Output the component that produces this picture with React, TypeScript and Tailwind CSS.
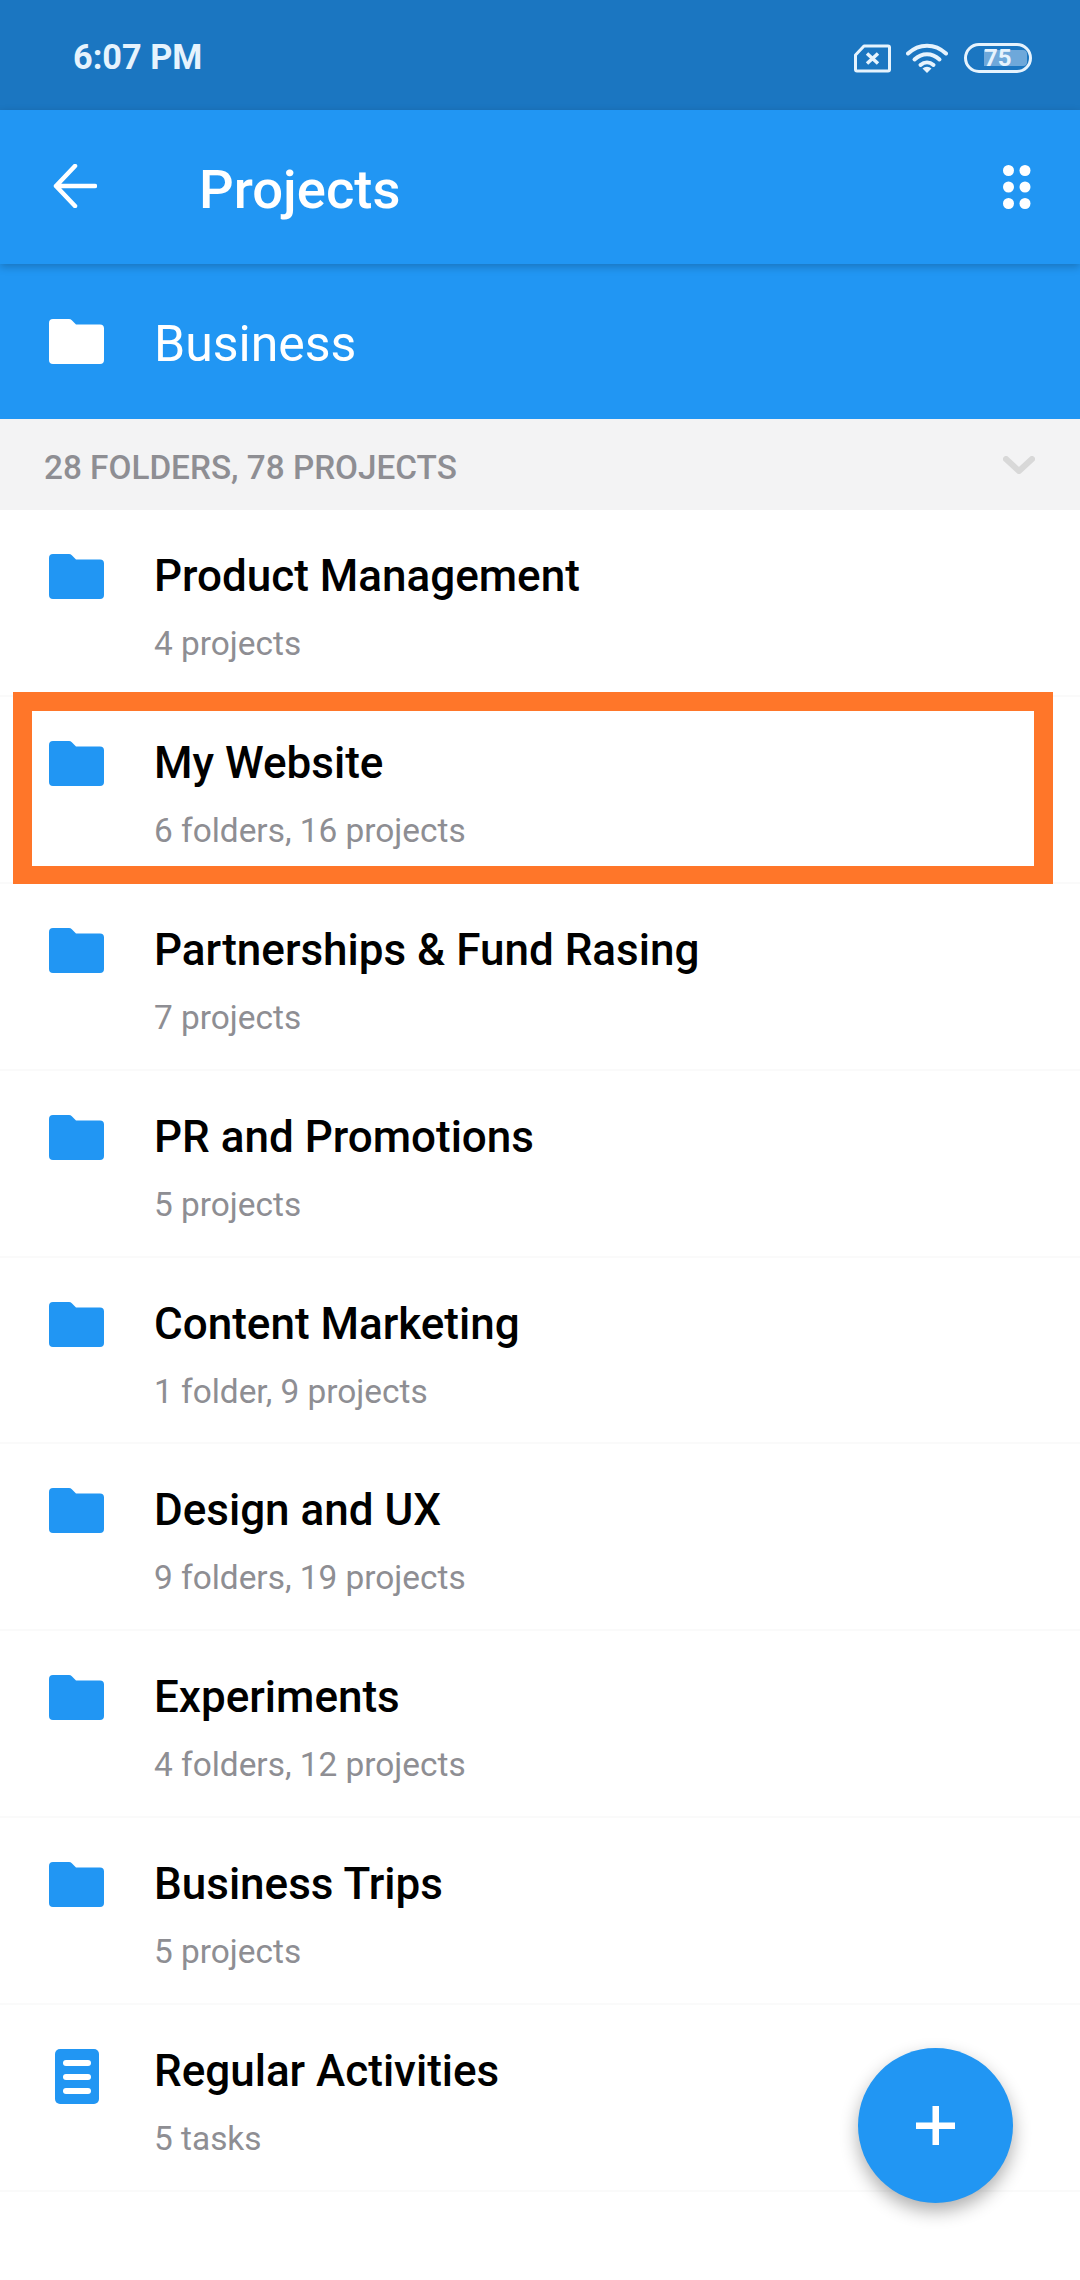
import { ReactNode } from 'react';

interface Project {
  name: string;
  meta: string;
  isList?: boolean;
}

const projects: Project[] = [
  { name: 'Product Management', meta: '4 projects' },
  { name: 'My Website', meta: '6 folders, 16 projects' },
  { name: 'Partnerships & Fund Rasing', meta: '7 projects' },
  { name: 'PR and Promotions', meta: '5 projects' },
  { name: 'Content Marketing', meta: '1 folder, 9 projects' },
  { name: 'Design and UX', meta: '9 folders, 19 projects' },
  { name: 'Experiments', meta: '4 folders, 12 projects' },
  { name: 'Business Trips', meta: '5 projects' },
  { name: 'Regular Activities', meta: '5 tasks', isList: true },
];

function FolderIcon({ className }: { className: string }) {
  return (
    <svg viewBox="0 0 55 45" className={className} fill="currentColor">
      <path d="M4 0H20a4 4 0 0 1 2.800 1.200L27 5.500H51a4 4 0 0 1 4 4V41a4 4 0 0 1-4 4H4a4 4 0 0 1-4-4V4a4 4 0 0 1 4-4z" />
    </svg>
  );
}

function ListIcon() {
  return (
    <svg viewBox="0 0 44 55" className="ml-[6px] h-[55px] w-[44px] text-[#2196f3]">
      <rect width="44" height="55" rx="5" fill="currentColor" />
      <rect x="8" y="11" width="28" height="6" rx="3" fill="#fff" />
      <rect x="8" y="25" width="28" height="6" rx="3" fill="#fff" />
      <rect x="8" y="39" width="28" height="6" rx="3" fill="#fff" />
    </svg>
  );
}

function StatusIcons(): ReactNode {
  return (
    <div className="flex items-center">
      <svg viewBox="0 0 37 29" className="h-[29px] w-[37px]" fill="none" stroke="#e6f3fd">
        <path d="M10 2H34a1.500 1.500 0 0 1 1.500 1.500V25.500A1.500 1.500 0 0 1 34 27H3a1.500 1.500 0 0 1-1.500-1.500V11z" strokeWidth="3" strokeLinejoin="round" />
        <path d="M13 9.500l11 10M24 9.500l-11 10" strokeWidth="3.500" />
      </svg>
      <svg viewBox="0 0 42 30" className="ml-[15px] h-[30px] w-[42px]" fill="none" stroke="#e6f3fd" strokeWidth="4" strokeLinecap="round">
        <path d="M2 10.500C13 0 29 0 40 10.500" />
        <path d="M8.500 16.500C16 9.500 26 9.500 33.500 16.500" />
        <path d="M14.500 22C18.500 18.500 23.500 18.500 27.500 22" />
        <path d="M21 30l-4.500-4.500a6.500 6.500 0 0 1 9 0z" fill="#e6f3fd" stroke="none" />
      </svg>
      <div className="relative ml-[16px] flex h-[30px] w-[68px] items-center rounded-full border-[3px] border-[#e6f3fd] pl-[17px]">
        <div className="absolute left-[17px] top-[4px] h-[16px] w-[43px] rounded-r-[4px] bg-[#6ea8da]" />
        <span className="relative text-[24px] font-bold leading-none text-[#e6f3fd]">75</span>
      </div>
    </div>
  );
}

function ProjectRow({ project }: { project: Project }) {
  return (
    <div className="flex h-[186.9px] border-b-2 border-[#fafafa] pl-[49px]">
      <div className="w-[105px] shrink-0 pt-[44px]">
        {project.isList ? <ListIcon /> : <FolderIcon className="h-[45px] w-[55px] text-[#2196f3]" />}
      </div>
      <div className="pt-[40px]">
        <div className="text-[44px] font-medium leading-[52px] text-black">{project.name}</div>
        <div className="mt-[22px] text-[33.400px] leading-[40px] text-[#8e8e93]">{project.meta}</div>
      </div>
    </div>
  );
}

export default function App() {
  return (
    <div className="relative h-[2280px] w-[1080px] overflow-hidden bg-white font-['Roboto',sans-serif]">
      <div className="flex h-[110px] items-center justify-between bg-[#1b76c1] pl-[73px] pr-[48px] pt-[6px]">
        <span className="text-[34.300px] font-bold text-[#e6f3fd]">6:07 PM</span>
        <StatusIcons />
      </div>

      <div className="relative z-10 flex h-[154px] items-center bg-[#2196f3] pl-[53px] pr-[49px] shadow-[0_3px_8px_rgba(0,0,0,0.22)]">
        <svg viewBox="0 0 44 44" className="mb-[2px] h-[44px] w-[44px]" fill="none" stroke="#fff" strokeWidth="4.500" strokeLinecap="round" strokeLinejoin="round">
          <path d="M42 22H3M22 2L3 22l19 20" />
        </svg>
        <span className="ml-[102px] flex-1 pt-[6px] text-[54.400px] font-medium text-white">Projects</span>
        <svg viewBox="0 0 28 44" className="h-[44px] w-[28px]" fill="#fff">
          <circle cx="5.500" cy="5.500" r="5.500" />
          <circle cx="22" cy="5.500" r="5.500" />
          <circle cx="5.500" cy="22" r="5.500" />
          <circle cx="22" cy="22" r="5.500" />
          <circle cx="5.500" cy="38.500" r="5.500" />
          <circle cx="22" cy="38.500" r="5.500" />
        </svg>
      </div>

      <div className="flex h-[155px] items-center bg-[#2196f3] pl-[49px]">
        <FolderIcon className="h-[45px] w-[55px] text-white" />
        <span className="ml-[50px] pt-[6px] text-[50px] text-white">Business</span>
      </div>

      <div className="flex h-[91px] items-center justify-between bg-[#f3f3f4] pl-[44px] pr-[45px]">
        <span className="pt-[6px] text-[33.300px] font-medium text-[#8e8e93]">28 FOLDERS, 78 PROJECTS</span>
        <svg viewBox="0 0 32 18" className="h-[18px] w-[32px]" fill="none" stroke="#d8d8d8" strokeWidth="6" strokeLinecap="round" strokeLinejoin="round">
          <path d="M3 3l13 12L29 3" />
        </svg>
      </div>

      {projects.map((project) => (
        <ProjectRow key={project.name} project={project} />
      ))}

      {/* Orange highlight drawn over the My Website row */}
      <div className="absolute left-[13px] top-[692px] h-[192px] w-[1040px] border-[19px] border-b-[18px] border-[#ff7629]" />

      <button className="absolute left-[858px] top-[2048px] flex h-[155px] w-[155px] items-center justify-center rounded-full bg-[#2196f3] shadow-[0_8px_18px_rgba(0,0,0,0.32)]">
        <svg viewBox="0 0 39 39" className="h-[39px] w-[39px]" fill="#fff">
          <rect x="16.500" width="6.500" height="39" />
          <rect y="16.500" width="39" height="6.500" />
        </svg>
      </button>
    </div>
  );
}
